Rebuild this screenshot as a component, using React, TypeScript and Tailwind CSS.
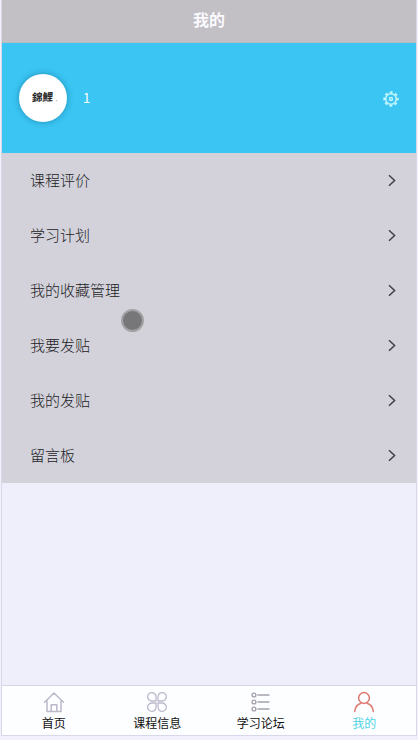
import React from 'react';

const menu = ['课程评价', '学习计划', '我的收藏管理', '我要发贴', '我的发贴', '留言板'];

function Gear() {
  return (
    <svg className="mt-px h-4 w-4" viewBox="0 0 16 16" fill="none" stroke="#c4f6fc">
      <circle cx="8" cy="8" r="6.800" strokeWidth="1.800" strokeDasharray="2.900 2.441" strokeDashoffset="1.450" />
      <circle cx="8" cy="8" r="5.300" strokeWidth="1.500" />
      <circle cx="8" cy="8" r="1.500" strokeWidth="1.400" />
    </svg>
  );
}

function Chevron() {
  return (
    <svg className="h-[13px] w-2" viewBox="0 0 8 13" fill="none" stroke="#404047" strokeWidth="1.5">
      <path d="M1 1.300 6.600 6.500 1 11.700" />
    </svg>
  );
}

function HomeIcon() {
  return (
    <svg className="size-[22px]" viewBox="0 0 22 22" fill="none" stroke="#bcb8ca" strokeWidth="1.5" strokeLinejoin="round" strokeLinecap="round">
      <path d="M1.500 11.200 11 2l9.500 9.200M4 9.500V20.500h14V9.500M8.200 20.500v-6.800h5.600v6.800" />
    </svg>
  );
}

function CloverIcon() {
  return (
    <svg className="size-[22px]" viewBox="0 0 22 22" fill="none" stroke="#bdb9cc" strokeWidth="1.300" strokeLinejoin="round">
      <path d="M10 10H5.900A4.200 4.200 0 1 1 10 5.800ZM12 10h4.100A4.200 4.200 0 1 0 12 5.800ZM10 12H5.900A4.200 4.200 0 1 0 10 16.200ZM12 12h4.100A4.200 4.200 0 1 1 12 16.200Z" />
    </svg>
  );
}

function ListIcon() {
  return (
    <svg className="size-[22px]" viewBox="0 0 22 22" fill="none" stroke="#a5a1af" strokeWidth="1.400">
      <circle cx="4" cy="4" r="1.900" />
      <circle cx="4" cy="11" r="1.900" />
      <circle cx="4" cy="18" r="1.900" />
      <path d="M7.500 4H19.500M7.500 11H19.500M7.500 18H19.500" />
    </svg>
  );
}

function PersonIcon() {
  return (
    <svg className="size-[22px]" viewBox="0 0 22 22" fill="none" stroke="#df7870" strokeWidth="1.500" strokeLinecap="round">
      <circle cx="11" cy="7" r="5.400" />
      <path d="M1.700 20.500c.5-4.500 3-7.200 6.300-8.200M14 12.300c3.300 1 5.800 3.700 6.300 8.200" />
    </svg>
  );
}

const tabs = [
  { label: '首页', icon: <HomeIcon />, color: 'text-[#111]' },
  { label: '课程信息', icon: <CloverIcon />, color: 'text-[#111]' },
  { label: '学习论坛', icon: <ListIcon />, color: 'text-[#111]' },
  { label: '我的', icon: <PersonIcon />, color: 'text-[#4ed3e6]' },
];

export default function App() {
  return (
    <div className="h-[740px] w-[418px] bg-[#f2f1fb] px-px pb-1 font-['Liberation_Sans','Noto_Sans_CJK_SC',sans-serif]">
      <div className="relative flex h-[736px] flex-col border-x border-b border-[#d9d8ea] bg-[#efeefb]">
        <header className="flex h-[43px] shrink-0 items-center justify-center border-b border-[#b5bdc5] bg-[#c2bfc5] text-base font-bold text-[#fafaff]">
          我的
        </header>
        <section className="flex h-[110px] shrink-0 items-center bg-[#3ac5f3] px-[17px]">
          <div className="flex size-12 items-center justify-center rounded-full bg-white pb-0.5 pl-1 shadow-[0_0_6px_rgba(0,60,90,0.4)]">
            <span className="-rotate-3 -skew-x-6 text-[10.5px] font-bold leading-none text-[#292929]">錦鯉</span>
            <span className="pl-0.5 pt-1 text-[8px] leading-none text-gray-500">.</span>
          </div>
          <span className="ml-4 flex-1 font-['Noto_Sans_CJK_SC',sans-serif] text-[13px] text-white">1</span>
          <Gear />
        </section>
        <nav className="shrink-0 bg-[#d3d2da]">
          {menu.map((label) => (
            <div key={label} className="flex h-[55px] items-center justify-between pl-7 pr-5 text-[15px] font-light text-[#222226]">
              <span className="pt-0.5">{label}</span>
              <Chevron />
            </div>
          ))}
        </nav>
        <div className="flex-1" />
        <footer className="grid h-[50px] shrink-0 grid-cols-4 border-t border-[#d5d4e2] bg-[#fcfeff]">
          {tabs.map((tab) => (
            <div key={tab.label} className={`flex flex-col items-center pt-[5px] text-xs leading-[22px] ${tab.color}`}>
              {tab.icon}
              <span>{tab.label}</span>
            </div>
          ))}
        </footer>
        <div className="absolute left-[119px] top-[309px] size-[23px] rounded-full border-2 border-[#a3a2a4] bg-[#777678]" />
      </div>
    </div>
  );
}
